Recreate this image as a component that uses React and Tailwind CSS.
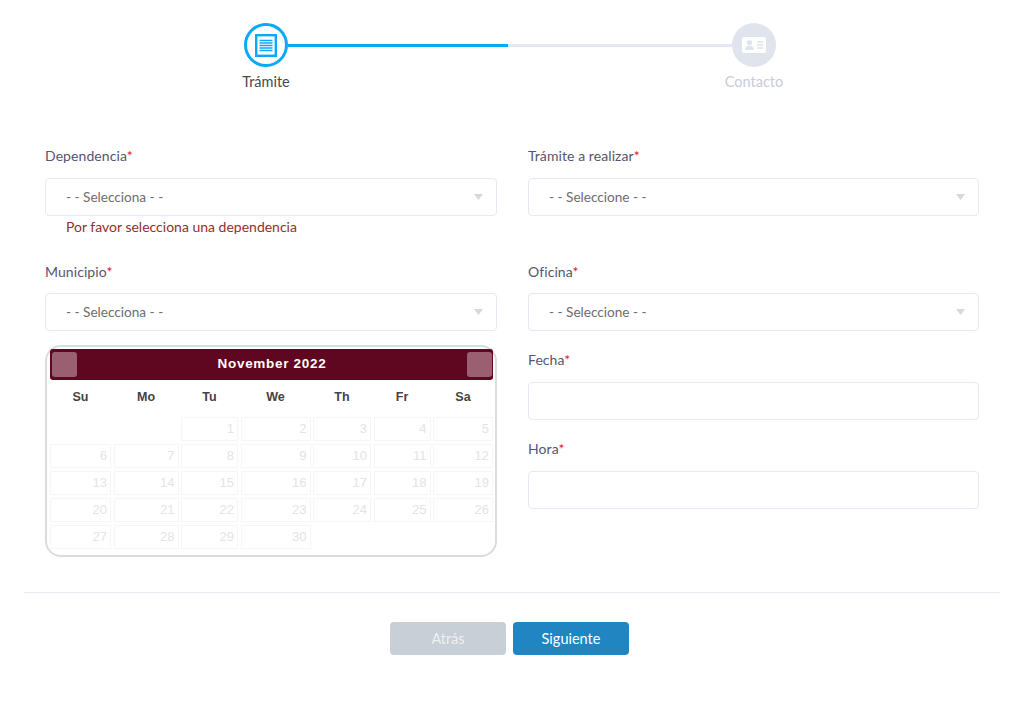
const LATO = "font-['Lato','Liberation_Sans',sans-serif]";

const weeks = [
  [null, null, 1, 2, 3, 4, 5],
  [6, 7, 8, 9, 10, 11, 12],
  [13, 14, 15, 16, 17, 18, 19],
  [20, 21, 22, 23, 24, 25, 26],
  [27, 28, 29, 30, null, null, null],
];
const dayNames = ["Su", "Mo", "Tu", "We", "Th", "Fr", "Sa"];
const columns = "grid grid-cols-[61px_65px_57px_70px_58px_57px_60px] gap-x-[2.5px]";

const Label = ({ text }) => (
  <label className="block text-[14px] leading-[17px] tracking-[0.08px] text-[#55556f]">
    {text}
    <span className="text-[#e8112d]">*</span>
  </label>
);

const Select = ({ placeholder }) => (
  <div className="flex h-[38px] items-center justify-between rounded border border-[#e6e9f2] bg-white pl-5 pr-[13px] text-[13.6px] text-[#6d6d6d]">
    <span>{placeholder}</span>
    <svg width="9" height="6" viewBox="0 0 9 6">
      <path d="M0 0h9L4.500 6z" fill="#d5d8dc" />
    </svg>
  </div>
);

const Calendar = () => (
  <div className="h-[212px] rounded-[16px] border-2 border-[#dcdcdc] pl-[3px] pr-[2px] pt-[2px] font-['Liberation_Sans',Arial,sans-serif]">
    <div className="flex h-[31px] items-center justify-between rounded-[3px] bg-[#5f0620] pl-[2px] pr-[1px]">
      <div className="h-[25px] w-[25px] rounded-[3px] bg-[#9a6072]" />
      <span className="text-[13.5px] font-bold tracking-[0.7px] text-white">November 2022</span>
      <div className="h-[25px] w-[25px] rounded-[3px] bg-[#9a6072]" />
    </div>
    <div className={`${columns} mt-[10px] mb-[12px]`}>
      {dayNames.map((d) => (
        <div key={d} className="text-center text-[12.500px] font-bold leading-[15px] text-[#444444]">
          {d}
        </div>
      ))}
    </div>
    <div className="flex flex-col gap-y-[3px]">
      {weeks.map((week, i) => (
        <div key={i} className={columns}>
          {week.map((day, j) =>
            day ? (
              <div
                key={j}
                className="h-[24px] border border-[#f6f6f6] pr-[3px] text-right text-[13px] leading-[22px] text-[#e4e4e4]"
              >
                {day}
              </div>
            ) : (
              <div key={j} />
            )
          )}
        </div>
      ))}
    </div>
  </div>
);

const Steps = () => (
  <div className="flex justify-center pr-[4px]">
    <div className="flex w-[532px] items-start">
      <div className="flex w-11 flex-col items-center">
        <div className="flex h-11 w-11 items-center justify-center rounded-full border-[3px] border-[#0aa9f5] bg-white">
          <svg width="22" height="23" viewBox="0 0 22 23" fill="none">
            <rect x="1.200" y="1.200" width="19.600" height="20.600" stroke="#0aa9f5" strokeWidth="2.400" />
            <path d="M4.500 6.500h13M4.500 9h13M4.500 11.500h13M4.500 14h13M4.500 16.500h13" stroke="#0aa9f5" strokeWidth="1.300" />
          </svg>
        </div>
        <span className="mt-[6px] whitespace-nowrap text-[14.500px] leading-[18px] text-[#4a4a4a]">Trámite</span>
      </div>
      <div className="mt-[21px] flex h-[3px] flex-1">
        <div className="w-[220px] bg-[#0aa9f5]" />
        <div className="flex-1 bg-[#e2e7f1]" />
      </div>
      <div className="flex w-11 flex-col items-center">
        <div className="flex h-11 w-11 items-center justify-center rounded-full bg-[#e0e4ed]">
          <svg width="24" height="16" viewBox="0 0 24 16">
            <rect x="0" y="0" width="24" height="16" rx="2.500" fill="#ffffff" />
            <circle cx="7.500" cy="5.500" r="2.600" fill="#e0e4ed" />
            <path d="M3 13c0-3 2-4.500 4.500-4.500S12 10 12 13z" fill="#e0e4ed" />
            <path d="M15 5h6M15 8h6M15 11h6" stroke="#e0e4ed" strokeWidth="1.300" />
          </svg>
        </div>
        <span className="mt-[6px] whitespace-nowrap text-[14.500px] leading-[18px] text-[#c9cbdc]">Contacto</span>
      </div>
    </div>
  </div>
);

export default function App() {
  return (
    <div className={`${LATO} h-[703px] w-full bg-white pt-[23px]`}>
      <Steps />

      <div className="mt-[56px] grid grid-cols-[452px_451px] gap-x-[31px] px-[45px]">
        <div>
          <Label text="Dependencia" />
          <div className="mt-[14px]">
            <Select placeholder="- - Selecciona - -" />
          </div>
          <p className="mt-[2px] pl-[21px] text-[14px] leading-[18px] text-[#972d2d]">
            Por favor selecciona una dependencia
          </p>
          <div className="mt-[27px]">
            <Label text="Municipio" />
          </div>
          <div className="mt-[13px]">
            <Select placeholder="- - Selecciona - -" />
          </div>
          <div className="mt-[14px]">
            <Calendar />
          </div>
        </div>

        <div>
          <Label text="Trámite a realizar" />
          <div className="mt-[14px]">
            <Select placeholder="- - Seleccione - -" />
          </div>
          <div className="mt-[47px]">
            <Label text="Oficina" />
          </div>
          <div className="mt-[13px]">
            <Select placeholder="- - Seleccione - -" />
          </div>
          <div className="mt-[20px]">
            <Label text="Fecha" />
          </div>
          <div className="mt-[14px] h-[38px] rounded border border-[#e6e9f2]" />
          <div className="mt-[20px]">
            <Label text="Hora" />
          </div>
          <div className="mt-[14px] h-[38px] rounded border border-[#e6e9f2]" />
        </div>
      </div>

      <div className="mx-[24px] mt-[35px] border-t border-[#e8eaf2]" />

      <div className="mt-[29px] flex justify-center gap-[7px] pr-[5px]">
        <button className="h-[33px] w-[116px] rounded bg-[#c8cfd6] text-[14.500px] text-[#eef0f2]">Atrás</button>
        <button className="h-[33px] w-[116px] rounded bg-[#2185c2] text-[14.500px] text-white">Siguiente</button>
      </div>
    </div>
  );
}
